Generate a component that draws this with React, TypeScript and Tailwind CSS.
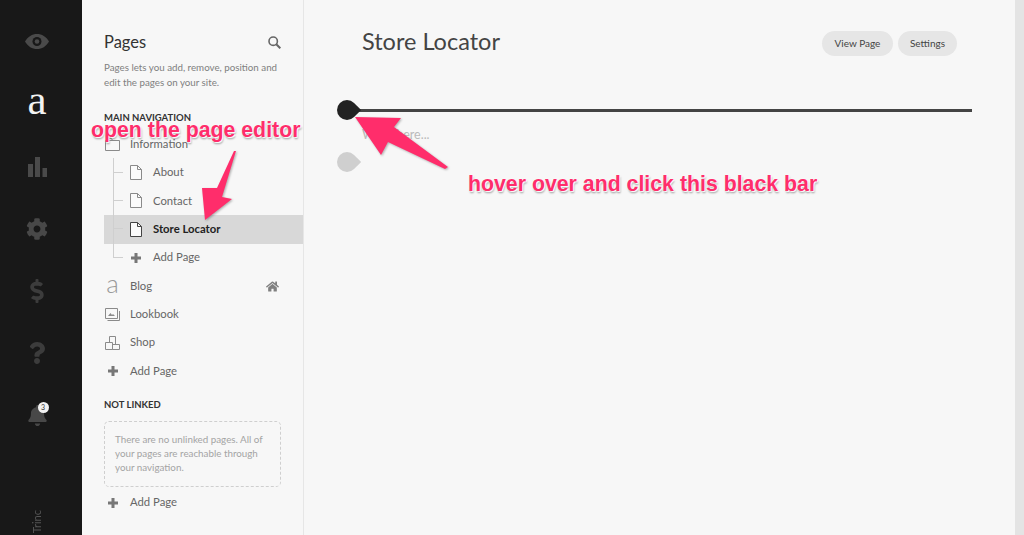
import { FaBell, FaCog, FaDollarSign, FaHome, FaQuestion } from "react-icons/fa";

const sans = "font-['Lato','Noto_Sans',sans-serif]";

function PageIcon({ dark }: { dark?: boolean }) {
  return (
    <svg width="12" height="15" viewBox="0 0 12 15" fill="none" stroke={dark ? "#444" : "#8a8a8a"} strokeWidth="1">
      <path d="M.5.5h7l4 4v10H.5z" fill="#fbfbfb" />
      <path d="M7.5.5v4h4" />
    </svg>
  );
}

function PlusIcon() {
  return (
    <svg width="10" height="10" viewBox="0 0 10 10" fill="#777">
      <path d="M3.5 0h3v3.5H10v3H6.5V10h-3V6.5H0v-3h3.5z" />
    </svg>
  );
}

function FolderIcon() {
  return (
    <svg width="15" height="13" viewBox="0 0 15 13" fill="none" stroke="#8a8a8a">
      <path d="M.5 2.5h14v10H.5zM.5 2.5l2-2h4l1 2" />
    </svg>
  );
}

function LookbookIcon() {
  return (
    <svg width="15" height="14" viewBox="0 0 15 14" fill="none" stroke="#8a8a8a">
      <path d="M.5.5h12v10H.5z" fill="#f7f7f7" />
      <path d="M2.5 12.5h12V3" />
      <path d="M3 8l2.5-3L7 7l1-1 2 2z" fill="#8a8a8a" stroke="none" />
    </svg>
  );
}

function ShopIcon() {
  return (
    <svg width="15" height="14" viewBox="0 0 15 14" fill="none" stroke="#8a8a8a">
      <path d="M.5 6.500h7v7h-7zM7.500 8.500h7v5h-7zM4.500 6.500V.5h6v8" />
    </svg>
  );
}

function BarsIcon() {
  return (
    <svg width="19" height="20" viewBox="0 0 19 20" fill="#4a4a4a">
      <path d="M0 7h5v13H0zM7 0h5v20H7zM14.500 11H19v9h-4.500z" />
    </svg>
  );
}

function EyeIcon() {
  return (
    <svg width="24" height="15" viewBox="0 0 24 15">
      <path d="M0 7.500C3 2.500 7 0 12 0s9 2.500 12 7.500C21 12.500 17 15 12 15S3 12.500 0 7.500z" fill="#4a4a4a" />
      <circle cx="12" cy="7.500" r="4.500" fill="#181818" />
      <circle cx="12" cy="7.500" r="2.300" fill="#4a4a4a" />
    </svg>
  );
}

function SearchIcon() {
  return (
    <svg width="13" height="13" viewBox="0 0 13 13" fill="none" stroke="#666" strokeWidth="1.600">
      <circle cx="5.200" cy="5.200" r="4.200" />
      <path d="M8.300 8.300L12.300 12.300" strokeWidth="2" />
    </svg>
  );
}

function TopRow({ icon, label, right }: { icon: React.ReactNode; label: string; right?: React.ReactNode }) {
  return (
    <div className="flex h-[28.4px] items-center">
      <div className="flex w-[26px] items-center justify-center pr-[9px]">{icon}</div>
      <span className="text-[11.3px] text-[#666]">{label}</span>
      {right && <div className="mr-[24px] ml-auto flex items-center">{right}</div>}
    </div>
  );
}

function SubRow({ icon, label, active, last }: { icon: React.ReactNode; label: string; active?: boolean; last?: boolean }) {
  return (
    <div className={`flex h-[28.4px] items-center pl-[9px] ${active ? "bg-[#d8d8d8]" : ""}`}>
      <div className={`h-full w-[10px] ${last ? "" : "border-l border-[#cfcfcf]"}`}>
        <div className={`h-1/2 border-b border-[#cfcfcf] ${last ? "border-l" : ""}`} />
      </div>
      <div className="flex w-[30px] items-center justify-center pr-[5px]">{icon}</div>
      <span className={`text-[11.3px] ${active ? "font-bold text-[#222]" : "text-[#666]"}`}>{label}</span>
    </div>
  );
}

function Pin({ dark }: { dark?: boolean }) {
  return <div className={`h-[20px] w-[20px] shrink-0 rotate-45 rounded-full rounded-tr-[3px] ${dark ? "bg-[#222]" : "bg-[#cfcfcf]"}`} />;
}

const railIcon = "flex h-[62px] w-full items-center justify-center";
const note = "absolute whitespace-nowrap font-['Liberation_Sans',Arial,sans-serif] text-[21.3px] font-bold text-[#ff2d6b] [text-shadow:0_0_2px_#fff,1px_1px_1px_#fff,1px_2px_2px_rgba(0,0,0,0.4)]";

export default function App() {
  return (
    <div className={`relative flex h-[535px] w-[1024px] overflow-hidden bg-[#f7f7f7] ${sans}`}>
      {/* left rail */}
      <aside className="relative flex w-[82px] shrink-0 flex-col items-center bg-[#181818] pt-[10px] pr-[8px]">
        <div className={railIcon}><EyeIcon /></div>
        <div className={railIcon}>
          <span className="-mt-[8px] font-['Liberation_Serif',serif] text-[43px] leading-none text-[#f2f2f2]">a</span>
        </div>
        <div className={`${railIcon} mt-[2px]`}><BarsIcon /></div>
        <div className={`${railIcon} text-[#484848]`}><FaCog size={22} /></div>
        <div className={`${railIcon} text-[#3c3c3c]`}><FaDollarSign size={24} /></div>
        <div className={`${railIcon} text-[#3c3c3c]`}><FaQuestion size={22} /></div>
        <div className={`${railIcon} text-[#484848]`}>
          <div className="relative">
            <FaBell size={21} />
            <span className="absolute -top-[3px] left-[11px] flex h-[11px] w-[11px] items-center justify-center rounded-full bg-[#f2f2f2] text-[7px] text-[#333]">3</span>
          </div>
        </div>
        <span className="absolute bottom-[2px] left-[31px] rotate-180 text-[11px] leading-none text-[#555] [writing-mode:vertical-rl]">Trinc</span>
      </aside>

      {/* pages panel */}
      <nav className="w-[222px] shrink-0 border-r border-[#e6e6e6] pt-[32px] pl-[22px]">
        <div className="flex h-[20px] items-center pr-[22px]">
          <h2 className="text-[16.500px] text-[#333]">Pages</h2>
          <div className="ml-auto"><SearchIcon /></div>
        </div>
        <p className="mt-[8px] w-[180px] text-[9.750px] leading-[14.500px] text-[#808080]">
          Pages lets you add, remove, position and edit the pages on your site.
        </p>
        <h3 className="mt-[22px] h-[14px] text-[9.500px] leading-[14px] font-bold text-[#333]">MAIN NAVIGATION</h3>
        <div className="mt-[5px]">
          <TopRow icon={<FolderIcon />} label="Information" />
          <SubRow icon={<PageIcon />} label="About" />
          <SubRow icon={<PageIcon />} label="Contact" />
          <SubRow icon={<PageIcon dark />} label="Store Locator" active />
          <SubRow icon={<PlusIcon />} label="Add Page" last />
          <TopRow
            icon={<span className="-mt-[6px] text-[26px] leading-none font-light text-[#999]">a</span>}
            label="Blog"
            right={<FaHome size={13} className="text-[#808080]" />}
          />
          <TopRow icon={<LookbookIcon />} label="Lookbook" />
          <TopRow icon={<ShopIcon />} label="Shop" />
          <TopRow icon={<PlusIcon />} label="Add Page" />
        </div>
        <h3 className="mt-[12px] h-[14px] text-[9.500px] leading-[14px] font-bold text-[#333]">NOT LINKED</h3>
        <div className="mt-[9px] mr-[22px] h-[66px] rounded-[5px] border border-dashed border-[#cfcfcf] px-[10px] py-[10px] text-[9.800px] leading-[14.300px] text-[#a4a4a4]">
          There are no unlinked pages. All of your pages are reachable through your navigation.
        </div>
        <div className="mt-[2px]">
          <TopRow icon={<PlusIcon />} label="Add Page" />
        </div>
      </nav>

      {/* editor */}
      <main className="min-w-0 flex-1">
        <header className="mt-[31px] mr-[58px] ml-[58px] flex h-[25px] items-center justify-between">
          <h1 className="-mt-[3px] text-[23.500px] font-normal text-[#444]">Store Locator</h1>
          <div className="flex gap-[5px]">
            <button className="h-[25px] w-[71px] rounded-full bg-[#e6e6e6] text-[10px] text-[#444]">View Page</button>
            <button className="h-[25px] w-[59px] rounded-full bg-[#e6e6e6] text-[10px] text-[#444]">Settings</button>
          </div>
        </header>
        <div className="mt-[44px] mr-[43px] ml-[33px] flex items-center">
          <Pin dark />
          <div className="-ml-[2px] h-[3px] flex-1 bg-[#444]" />
        </div>
        <p className="mt-[7px] ml-[58px] h-[16px] text-[12.500px] leading-[16px] text-[#bbb]">Write here...</p>
        <div className="mt-[9px] ml-[33px]"><Pin /></div>
      </main>

      {/* scrollbar track */}
      <div className="w-[9px] shrink-0 bg-[#e4e4e4]" />

      {/* annotations */}
      <svg className="absolute top-0 left-0" width="1024" height="535" fill="#ff2d6b" style={{ filter: "drop-shadow(1px 1px 1px rgba(0,0,0,.3))" }}>
        <path d="M234 151L217 188H202L205 220L232 199L222 197L236 151z" />
        <path d="M355 117L401 118L394 127L448 167L445 169L388 142L381 155z" />
      </svg>
      <span className={`${note} top-[115px] left-[91px]`}>open the page editor</span>
      <span className={`${note} top-[169px] left-[468px]`}>hover over and click this black bar</span>
    </div>
  );
}
